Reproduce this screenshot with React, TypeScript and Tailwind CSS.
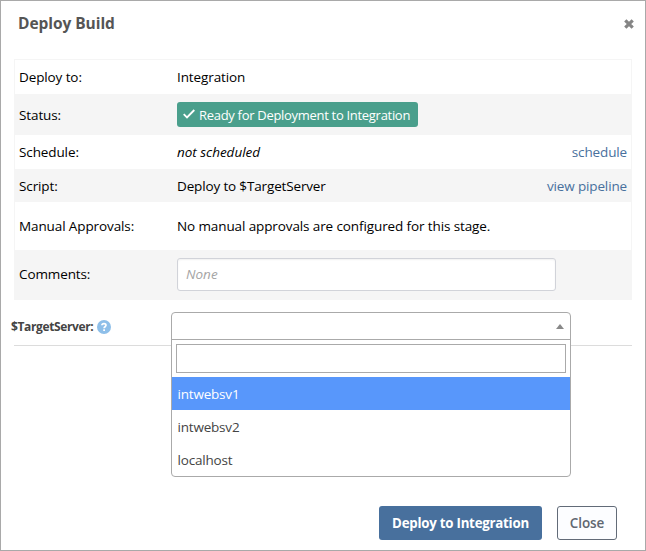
import type { ReactNode } from 'react';

function Row({ label, height, shaded, action, children }: { label: string; height: string; shaded?: boolean; action?: string; children: ReactNode }) {
  return (
    <div className={`flex items-center px-1 ${height} ${shaded ? 'bg-[#f5f5f5]' : 'bg-white'}`}>
      <div className="w-[158px] shrink-0">{label}</div>
      <div className="flex flex-1 items-center">{children}</div>
      {action && <a className="tracking-[-0.14px] text-[#48709d]">{action}</a>}
    </div>
  );
}

export default function App() {
  return (
    <div className="flex h-[551px] w-[646px] flex-col border border-[#a9a9a9] bg-white font-['Open_Sans','Noto_Sans',sans-serif] text-[13.5px] leading-5 tracking-[-0.11px] text-black">
      <header className="flex h-[58px] items-start justify-between pl-[17px] pr-[11px] pt-[12px]">
        <h1 className="text-[15.5px] font-bold tracking-[-0.05px] text-[#555]">Deploy Build</h1>
        <svg className="mt-[6px] h-[10px] w-[10px]" viewBox="0 0 10 10" stroke="#858585" strokeWidth="3.2">
          <path d="M1.3 1.3L8.7 8.7M8.7 1.3L1.3 8.7" />
        </svg>
      </header>

      <section className="mx-[13px] h-[241px] w-[618px] border border-[#f5f5f5]">
        <Row label="Deploy to:" height="h-[34px]">Integration</Row>
        <Row label="Status:" height="h-[41px]" shaded>
          <span className="flex h-[25px] w-[241px] items-center rounded-[3px] bg-[#4a9f8c] pl-[6px] text-[13px] tracking-[-0.3px] text-white">
            <svg className="mb-[2px] mr-[4px] h-[10px] w-[12px] shrink-0" viewBox="0 0 12 10" fill="none" stroke="white" strokeWidth="1.8">
              <path d="M.7 5.2L4 8.4L11.3 1" />
            </svg>
            <span className="whitespace-nowrap">Ready for Deployment to Integration</span>
          </span>
        </Row>
        <Row label="Schedule:" height="h-[34px]" action="schedule"><span className="italic tracking-[-0.02px]">not scheduled</span></Row>
        <Row label="Script:" height="h-[33px]" shaded action="view pipeline"><span className="tracking-[-0.15px]">Deploy to $TargetServer</span></Row>
        <Row label="Manual Approvals:" height="h-[48px]">No manual approvals are configured for this stage.</Row>
        <Row label="Comments:" height="h-[49px] [&>div:first-child]:pb-[2px]" shaded>
          <div className="flex h-[33px] w-[379px] items-center rounded-[3px] border border-[#d1d3d9] bg-white pb-px pl-[8px] italic tracking-normal text-[#a5a5a5] shadow-[inset_0_1px_2px_rgba(0,0,0,0.06)]">None</div>
        </Row>
      </section>

      <section className="relative mx-[13px] h-[46px] w-[618px] border-b border-[#dcdcdc]">
        <div className="-ml-[3px] flex h-[53px] items-center text-[12px] font-bold tracking-[-0.37px] text-[#444]">
          <span>$TargetServer:</span>
          <svg className="ml-[3.5px] h-[14px] w-[14px]" viewBox="0 0 14 14">
            <circle cx="7" cy="7" r="7" fill="#8ebfe9" />
            <path d="M4.9 5.3C5 3.2 9 3 9 5.3C9 6.8 7.1 6.7 7.1 8.2" fill="none" stroke="white" strokeWidth="1.7" />
            <rect x="6.2" y="9.3" width="1.8" height="1.7" fill="white" />
          </svg>
        </div>
        <div className="absolute left-[157px] top-[12px] h-[165px] w-[400px] rounded-[4px] border border-[#aaa] bg-white tracking-[-0.2px] text-[#444]">
          <div className="flex h-[27px] items-center justify-end border-b border-[#aaa] pr-[6px]">
            <svg className="mt-[1px] h-[5px] w-[8px]" viewBox="0 0 8 5"><path d="M0 5L4 0L8 5Z" fill="#888" /></svg>
          </div>
          <div className="p-1"><div className="h-[29px] border border-[#aaa]" /></div>
          <div className="flex h-[33px] items-center bg-[#5897fb] pl-[5.5px] text-white">intwebsv1</div>
          <div className="flex h-[33px] items-center pl-[5.5px]">intwebsv2</div>
          <div className="flex h-[33px] items-center pl-[5.5px]">localhost</div>
        </div>
      </section>

      <footer className="mt-[160px] flex justify-end gap-[15px] pr-[28px]">
        <button className="h-[34px] w-[163px] rounded-[3px] bg-[#48709d] text-[13.3px] font-bold tracking-[-0.25px] text-white">Deploy to Integration</button>
        <button className="h-[34px] w-[60px] rounded-[3px] border border-[#626b78] bg-[#fcfdff] font-semibold text-[#606771]">Close</button>
      </footer>
    </div>
  );
}
